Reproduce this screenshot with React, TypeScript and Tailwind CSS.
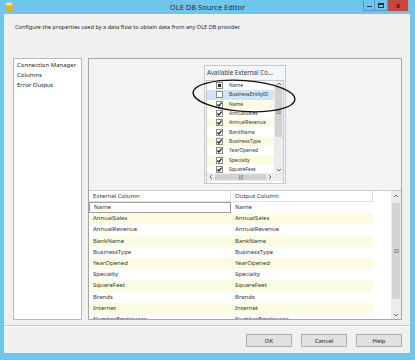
import React from "react";

type Check = "on" | "off" | "partial";

const available: { name: string; state: Check; bg: string }[] = [
  { name: "Name", state: "partial", bg: "bg-white" },
  { name: "BusinessEntityID", state: "off", bg: "bg-[#cfe5f7]" },
  { name: "Name", state: "on", bg: "bg-[#fbfbe2]" },
  { name: "AnnualSales", state: "on", bg: "bg-white" },
  { name: "AnnualRevenue", state: "on", bg: "bg-[#fbfbe2]" },
  { name: "BankName", state: "on", bg: "bg-white" },
  { name: "BusinessType", state: "on", bg: "bg-[#fbfbe2]" },
  { name: "YearOpened", state: "on", bg: "bg-white" },
  { name: "Specialty", state: "on", bg: "bg-[#fbfbe2]" },
  { name: "SquareFeet", state: "on", bg: "bg-white" },
];

const columns = [
  "Name",
  "AnnualSales",
  "AnnualRevenue",
  "BankName",
  "BusinessType",
  "YearOpened",
  "Specialty",
  "SquareFeet",
  "Brands",
  "Internet",
  "NumberEmployees",
];

function CheckBox({ state }: { state: Check }) {
  return (
    <svg width="7" height="7" viewBox="0 0 7 7" className="shrink-0">
      <rect x="0.5" y="0.5" width="6" height="6" fill="white" stroke="#8c8c8c" />
      {state === "on" ? <path d="M1.4 3.5 L2.9 5 L5.6 1.7" fill="none" stroke="#1f1f1f" strokeWidth="1.2" /> : null}
      {state === "partial" ? <rect x="2" y="2" width="3" height="3" fill="#2a2a2a" /> : null}
    </svg>
  );
}

function Arrow({ dir }: { dir: "up" | "down" | "left" | "right" }) {
  const d = {
    up: "M1 4 L3 2 L5 4",
    down: "M1 2 L3 4 L5 2",
    left: "M4 1 L2 3 L4 5",
    right: "M2 1 L4 3 L2 5",
  }[dir];
  return (
    <svg width="6" height="6" viewBox="0 0 6 6" className="shrink-0">
      <path d={d} fill="none" stroke="#606060" strokeWidth="0.9" />
    </svg>
  );
}

function Grip({ vertical }: { vertical: boolean }) {
  return vertical ? (
    <svg width="5" height="4" viewBox="0 0 5 4">
      <path d="M0 0.5 H5 M0 2 H5 M0 3.5 H5" stroke="#777" strokeWidth="0.6" />
    </svg>
  ) : (
    <svg width="4" height="5" viewBox="0 0 4 5">
      <path d="M0.5 0 V5 M2 0 V5 M3.5 0 V5" stroke="#777" strokeWidth="0.6" />
    </svg>
  );
}

function DbIcon() {
  return (
    <svg width="8" height="10" viewBox="0 0 8 10">
      <path d="M0.5 2 V8 C0.5 9 2 9.6 4 9.6 C6 9.6 7.5 9 7.5 8 V2 Z" fill="#e4b523" />
      <ellipse cx="4" cy="2" rx="3.5" ry="1.5" fill="#f8e08a" />
      <path d="M0.5 5 C0.5 6 2 6.5 4 6.5" fill="none" stroke="#c89210" strokeWidth="0.5" />
    </svg>
  );
}

export default function App() {
  return (
    <div className="flex h-[360px] w-[415px] flex-col overflow-hidden bg-[#70c5ea] font-['Noto_Sans',sans-serif] text-[#1e1e1e]">
      {/* title bar */}
      <div className="grid h-[14px] shrink-0 grid-cols-[1fr_auto_1fr]">
        <div className="pl-[5px] pt-[2px]">
          <DbIcon />
        </div>
        <div className="text-[7.5px] leading-[14px] text-[#1b2d44]">OLE DB Source Editor</div>
        <div className="flex justify-end pr-[7px]">
          <div className="flex h-[11px] w-[12px] items-end justify-center border-x border-b border-[#4d9dc6] pb-[3px]">
            <div className="h-[1.5px] w-[5px] bg-[#1d2f44]" />
          </div>
          <div className="flex h-[11px] w-[13px] items-center justify-center border-b border-r border-[#4d9dc6]">
            <div className="h-[5px] w-[6px] border border-t-2 border-[#1d2f44]" />
          </div>
          <div className="flex h-[11px] w-[20px] items-center justify-center bg-[#c9483b] text-[7px] font-bold leading-none text-[#4a1410]">
            x
          </div>
        </div>
      </div>

      {/* client area */}
      <div className="mb-[7px] ml-[4px] mr-[5px] flex flex-1 flex-col bg-[#f0f0f0]">
        <p className="ml-[11px] mt-[10px] text-[5.6px] leading-[6px] text-[#2a2a2a]">
          Configure the properties used by a data flow to obtain data from any OLE DB provider.
        </p>

        <div className="mt-[28px] flex h-[262px]">
          <div className="ml-[9px] w-[69px] border border-[#b9b9b9] bg-white pl-[3px] pt-[1px] text-[6px] leading-[10px] text-[#222]">
            <div>Connection Manager</div>
            <div>Columns</div>
            <div>Error Output</div>
          </div>

          <div className="ml-[6px] flex w-[314px] flex-col border border-[#a6a6a6] bg-[#f3f3f3]">
            {/* mapping canvas */}
            <div className="relative flex h-[131px] justify-center pt-[6px]">
              <div className="flex h-[119px] w-[82px] flex-col border border-[#c3cad2] bg-[#f4f5f6]">
                <div className="h-[14px] pl-[2px] text-[6.2px] leading-[14px] text-[#2c3d55]">Available External Co...</div>
                <div className="mx-[1px] flex flex-col border border-[#c9c9c9] bg-white">
                  <div className="flex h-[92px]">
                    <div className="flex-1 overflow-hidden">
                      {available.map((row, i) => (
                        <div key={i} className={`flex h-[9.3px] items-center ${row.bg}`}>
                          <div className="ml-[9px]">
                            <CheckBox state={row.state} />
                          </div>
                          <span className="ml-[6px] whitespace-nowrap text-[5px] leading-none text-[#333]">{row.name}</span>
                        </div>
                      ))}
                    </div>
                    <div className="flex w-[9px] flex-col items-center bg-[#ececec]">
                      <Arrow dir="up" />
                      <div className="flex h-[50px] w-[7px] items-center justify-center bg-[#d2d2d2]">
                        <Grip vertical />
                      </div>
                      <div className="flex-1" />
                      <Arrow dir="down" />
                    </div>
                  </div>
                  <div className="flex h-[8px] items-center bg-[#ececec] pl-[1px] pr-[10px]">
                    <Arrow dir="left" />
                    <div className="mx-[1px] flex h-[6px] flex-1 items-center justify-center bg-[#d2d2d2]">
                      <Grip vertical={false} />
                    </div>
                    <Arrow dir="right" />
                  </div>
                  <div className="h-[2px]" />
                </div>
              </div>
              <svg className="absolute left-[102px] top-[19px]" width="108" height="38" viewBox="0 0 108 38">
                <ellipse cx="53" cy="18" rx="51" ry="15.5" transform="rotate(4 53 18)" fill="none" stroke="#111" strokeWidth="1.3" />
              </svg>
            </div>

            {/* column grid */}
            <div className="flex flex-1 overflow-hidden border-t border-[#c8c8c8] bg-white text-[6px] text-[#333]">
              <div className="w-[284px]">
                <div className="flex h-[11px] items-center border-b border-[#e2e2e2]">
                  <div className="w-[142px] border-r border-[#dcdcdc] pl-[4px] leading-[11px]">External Column</div>
                  <div className="w-[142px] border-r border-[#dcdcdc] pl-[4px] leading-[11px]">Output Column</div>
                </div>
                {columns.map((name, i) => (
                  <div key={i} className={`flex h-[11.2px] items-center ${i % 2 === 1 ? "bg-[#fcfce3]" : "bg-white"}`}>
                    <div
                      className={`flex h-full w-[142px] items-center pl-[4px] ${i === 0 ? "border border-[#9c9c9c]" : ""}`}
                    >
                      {name}
                    </div>
                    <div className="w-[142px] pl-[4px]">{name}</div>
                  </div>
                ))}
              </div>
              <div className="flex-1" />
              <div className="flex w-[10px] flex-col items-center bg-[#ececec] pt-[2px] pb-[1px]">
                <Arrow dir="up" />
                <div className="mt-[4px] flex h-[96px] w-[8px] items-center justify-center bg-[#d4d4d4]">
                  <Grip vertical />
                </div>
                <div className="flex-1" />
                <Arrow dir="down" />
              </div>
            </div>
          </div>
        </div>

        <div className="mt-[5px] h-[2px] border-t border-b border-t-[#c9c9c9] border-b-white" />

        <div className="mr-[8px] mt-[7px] flex justify-end gap-[9px]">
          {["OK", "Cancel", "Help"].map((label) => (
            <button
              key={label}
              className="h-[13px] w-[46px] border border-[#adadad] bg-[#e1e1e1] text-[6px] leading-none text-[#222]"
            >
              {label}
            </button>
          ))}
        </div>
      </div>
    </div>
  );
}
